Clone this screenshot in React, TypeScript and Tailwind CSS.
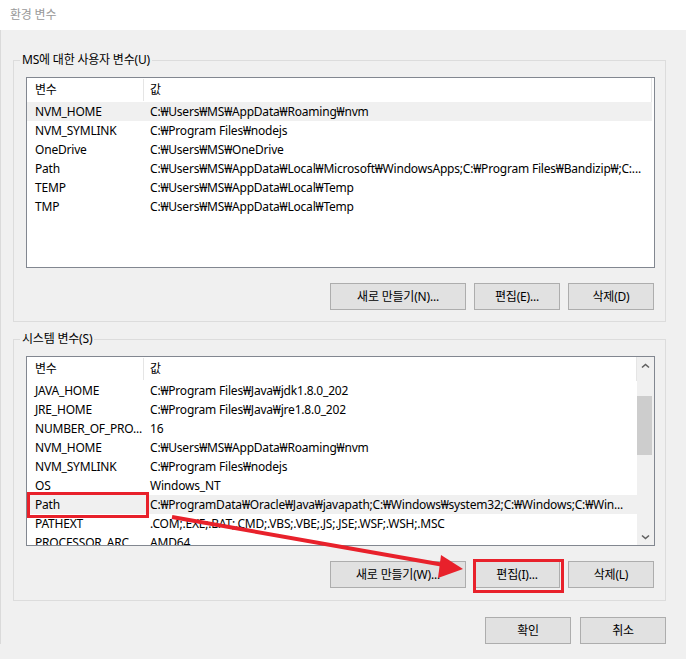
const userVars: [string, string][] = [
  ['NVM_HOME', 'C:₩Users₩MS₩AppData₩Roaming₩nvm'],
  ['NVM_SYMLINK', 'C:₩Program Files₩nodejs'],
  ['OneDrive', 'C:₩Users₩MS₩OneDrive'],
  ['Path', 'C:₩Users₩MS₩AppData₩Local₩Microsoft₩WindowsApps;C:₩Program Files₩Bandizip₩;C:...'],
  ['TEMP', 'C:₩Users₩MS₩AppData₩Local₩Temp'],
  ['TMP', 'C:₩Users₩MS₩AppData₩Local₩Temp'],
];

const systemVars: [string, string][] = [
  ['JAVA_HOME', 'C:₩Program Files₩Java₩jdk1.8.0_202'],
  ['JRE_HOME', 'C:₩Program Files₩Java₩jre1.8.0_202'],
  ['NUMBER_OF_PRO...', '16'],
  ['NVM_HOME', 'C:₩Users₩MS₩AppData₩Roaming₩nvm'],
  ['NVM_SYMLINK', 'C:₩Program Files₩nodejs'],
  ['OS', 'Windows_NT'],
  ['Path', 'C:₩ProgramData₩Oracle₩Java₩javapath;C:₩Windows₩system32;C:₩Windows;C:₩Win...'],
  ['PATHEXT', '.COM;.EXE;.BAT;.CMD;.VBS;.VBE;.JS;.JSE;.WSF;.WSH;.MSC'],
  ['PROCESSOR_ARC...', 'AMD64'],
];

function Chevron({ down }: { down?: boolean }) {
  return (
    <svg width="9" height="6" viewBox="0 0 9 6">
      <path
        d={down ? 'M1 1.5 L4.5 4.5 L8 1.5' : 'M1 4.5 L4.5 1.5 L8 4.5'}
        fill="none"
        stroke="#606060"
        strokeWidth="1.6"
      />
    </svg>
  );
}

function VarList({
  rows,
  selected,
  height,
  scroll,
}: {
  rows: [string, string][];
  selected: number;
  height: string;
  scroll?: boolean;
}) {
  return (
    <div className={`flex ${height} overflow-hidden border border-[#828790] bg-white`}>
      <div className={`flex min-w-0 flex-1 flex-col ${scroll ? '' : 'mr-[2px]'}`}>
        <div className="flex h-[24px] shrink-0 items-stretch border-r border-[#e5e5e5]">
          <div className="flex w-[116px] shrink-0 items-center pl-[8px]">
            <span>변수</span>
          </div>
          <div className="my-[1px] w-px bg-[#e5e5e5]" />
          <div className="flex items-center pl-[6px]">값</div>
        </div>
        {rows.map(([name, value], i) => (
          <div
            key={name + i}
            className={`flex h-[19px] shrink-0 items-center ${i === selected ? 'bg-[#f0f0f0]' : ''}`}
          >
            <div className="w-[117px] shrink-0 overflow-hidden whitespace-nowrap pl-[8px]">{name}</div>
            <div className="min-w-0 flex-1 truncate whitespace-nowrap pl-[6px] pr-[4px]">{value}</div>
          </div>
        ))}
      </div>
      {scroll && (
        <div className="flex w-[17px] shrink-0 flex-col bg-[#f0f0f0]">
          <div className="flex h-[17px] items-center justify-center">
            <Chevron />
          </div>
          <div className="flex-1">
            <div className="mr-[2px] mt-[22px] h-[59px] bg-[#cdcdcd]" />
          </div>
          <div className="flex h-[17px] items-center justify-center">
            <Chevron down />
          </div>
        </div>
      )}
    </div>
  );
}

function Btn({ label, width }: { label: string; width: string }) {
  return (
    <button
      className={`${width} h-[27px] border border-[#adadad] bg-[#e1e1e1] text-[12px] text-black`}
    >
      {label}
    </button>
  );
}

function Group({ title, children }: { title: string; children: React.ReactNode }) {
  return (
    <fieldset className="w-[653px] min-w-0 border border-[#dcdcdc] pb-[11px] pl-[12px] pr-[10px]">
      <legend className="-ml-[6px] px-[2px] leading-[16px]">{title}</legend>
      {children}
    </fieldset>
  );
}

export default function App() {
  return (
    <div
      className="relative h-[659px] w-[686px] overflow-hidden bg-[#f0f0f0] text-[12px] tracking-[-0.2px] text-black"
      style={{ fontFamily: '"Noto Sans", "Noto Sans CJK KR", sans-serif' }}
    >
      <div className="flex h-[30px] items-center bg-white pl-[10px] text-[#999999]">환경 변수</div>

      <div className="flex flex-col border-l border-[#dadada] pl-[12px]">
        <div className="mt-[22px]">
          <Group title="MS에 대한 사용자 변수(U)">
            <div className="mt-[9px]">
              <VarList rows={userVars} selected={0} height="h-[191px]" />
            </div>
            <div className="mt-[15px] flex justify-end gap-[8px] pr-px">
              <Btn label="새로 만들기(N)..." width="w-[136px]" />
              <Btn label="편집(E)..." width="w-[86px]" />
              <Btn label="삭제(D)" width="w-[86px]" />
            </div>
          </Group>
        </div>

        <div className="mt-[9px]">
          <Group title="시스템 변수(S)">
            <div className="mt-[9px]">
              <VarList rows={systemVars} selected={6} height="h-[190px]" scroll />
            </div>
            <div className="mt-[15px] flex justify-end gap-[8px] pb-px pr-px">
              <Btn label="새로 만들기(W)..." width="w-[136px]" />
              <Btn label="편집(I)..." width="w-[86px]" />
              <Btn label="삭제(L)" width="w-[86px]" />
            </div>
          </Group>
        </div>

        <div className="mt-[16px] flex w-[653px] justify-end gap-[9px]">
          <Btn label="확인" width="w-[86px]" />
          <Btn label="취소" width="w-[86px]" />
        </div>
      </div>

      {/* screenshot annotation */}
      <svg className="pointer-events-none absolute inset-0" width="686" height="659" viewBox="0 0 686 659">
        <rect x="28.5" y="493.5" width="119" height="23" fill="none" stroke="#e8212b" strokeWidth="3" />
        <rect x="474.5" y="560.5" width="88" height="31" fill="none" stroke="#e8212b" strokeWidth="3" />
        <line x1="172" y1="517" x2="444" y2="565" stroke="#e8212b" strokeWidth="4" />
        <polygon points="463,569 441,555 438,578" fill="#e8212b" />
      </svg>
    </div>
  );
}
